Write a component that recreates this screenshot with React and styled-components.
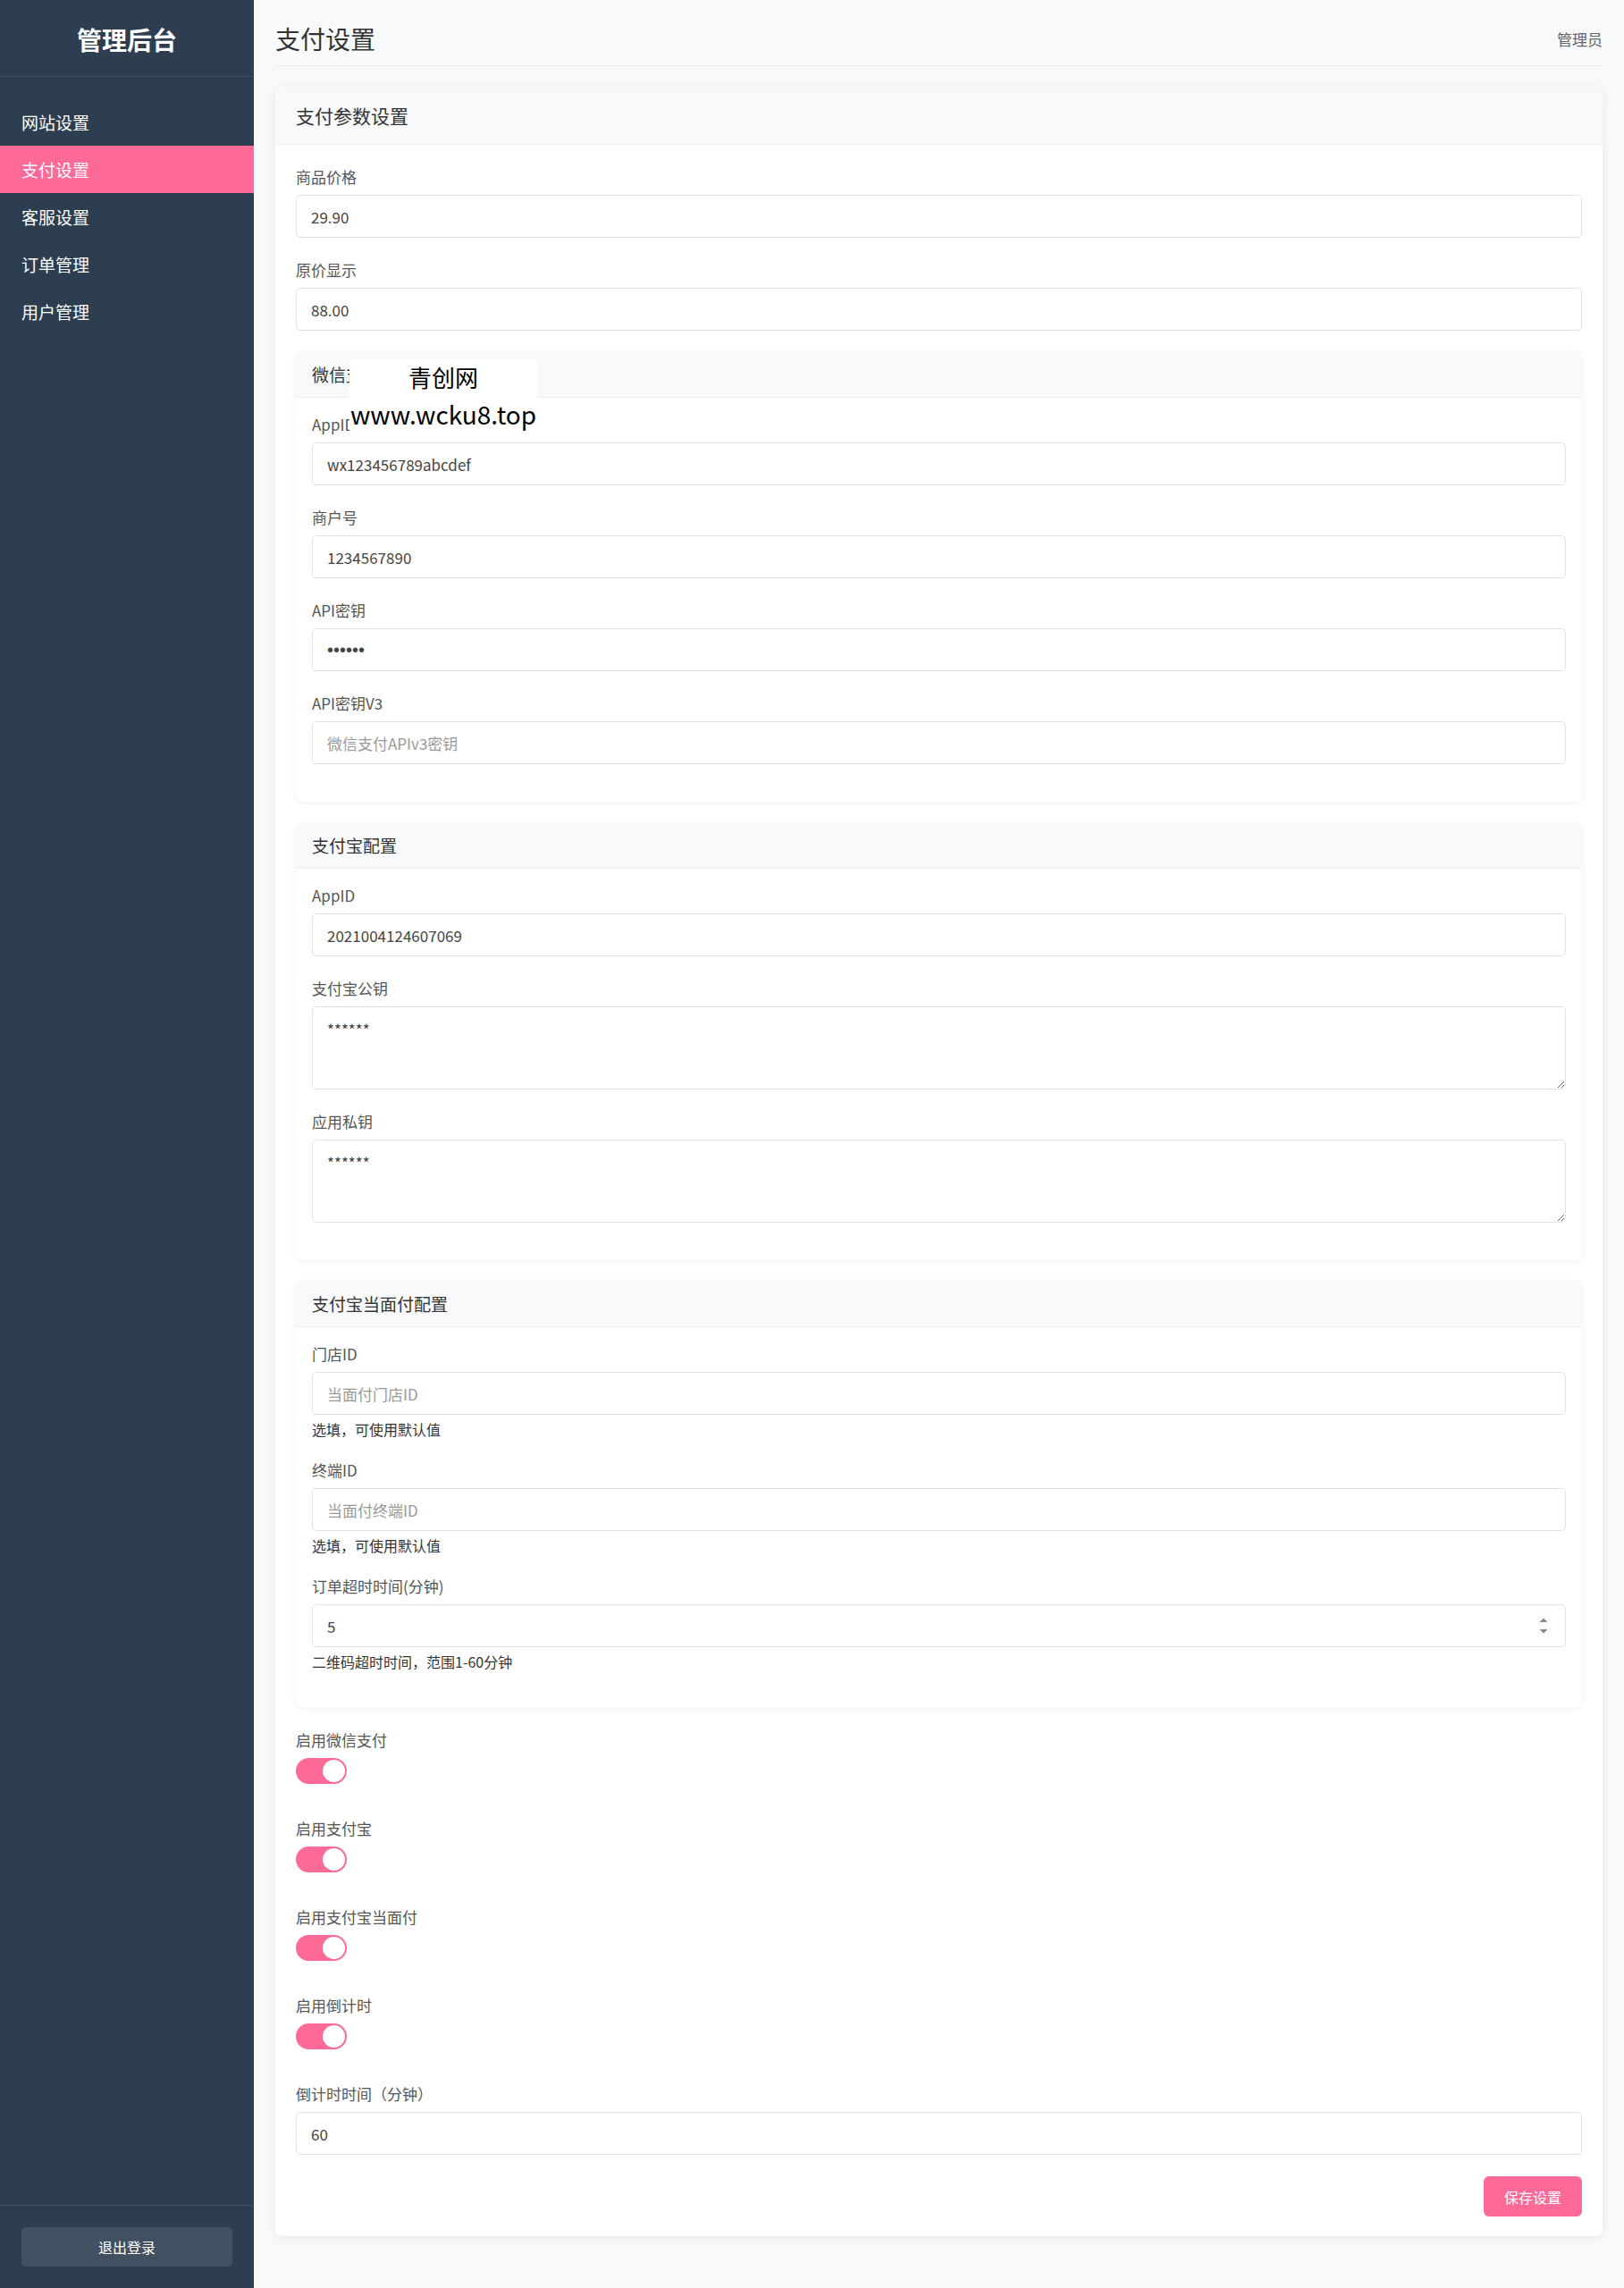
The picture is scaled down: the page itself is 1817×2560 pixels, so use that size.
import React from "react";
import styled, { createGlobalStyle } from "styled-components";

const pink = "#fe6a98";
const font = `"Noto Sans CJK SC", "Liberation Sans", sans-serif`;

const GlobalStyle = createGlobalStyle`
  * {
    box-sizing: border-box;
  }

  body {
    margin: 0;
    background-color: #f8f9fa;
    font-family: ${font};
  }
`;

const Layout = styled.div`
  display: flex;
  min-height: 100vh;
`;

/* Sidebar */

const Sidebar = styled.aside`
  display: flex;
  flex-direction: column;
  flex-shrink: 0;
  width: 284px;
  background-color: #2c3e50;
  color: #fff;
`;

const Brand = styled.div`
  height: 86px;
  padding-top: 24px;
  border-bottom: 1px solid rgba(255, 255, 255, 0.1);
  text-align: center;
  font-size: 28px;
  font-weight: 700;
  line-height: 40px;
`;

const Nav = styled.nav`
  display: flex;
  flex-direction: column;
  flex: 1;
  padding-top: 24px;
`;

const NavItem = styled.div`
  display: flex;
  align-items: center;
  height: 53px;
  padding: 0 24px;
  background-color: ${(p) => (p.$active ? pink : "transparent")};
  font-size: 19px;
  color: #fff;
`;

const SidebarFooter = styled.div`
  padding: 24px;
  border-top: 1px solid rgba(255, 255, 255, 0.1);
`;

const LogoutButton = styled.button`
  display: block;
  width: 236px;
  height: 44px;
  border: none;
  border-radius: 5px;
  background-color: rgba(255, 255, 255, 0.1);
  font-family: ${font};
  font-size: 16px;
  color: #fff;
`;

/* Main */

const Main = styled.main`
  flex: 1;
  min-width: 0;
  padding: 23px 24px 24px;
`;

const Header = styled.header`
  display: flex;
  justify-content: space-between;
  align-items: center;
  padding-bottom: 10px;
  border-bottom: 1px solid #e9ecef;
`;

const PageTitle = styled.h1`
  margin: 0;
  font-size: 28px;
  font-weight: 400;
  line-height: 40px;
  color: #333;
`;

const UserName = styled.span`
  font-size: 17px;
  color: #666;
`;

const Card = styled.section`
  margin-top: 23px;
  border-radius: 8px;
  background-color: #fff;
  box-shadow: 0 2px 12px rgba(0, 0, 0, 0.08);
  overflow: hidden;
`;

const CardHeader = styled.div`
  padding: 18px 23px;
  border-bottom: 1px solid #eee;
  background-color: #f8f9fa;
  font-size: 21px;
  line-height: 28px;
  color: #333;
`;

const CardBody = styled.div`
  padding: 24px 23px 22px;
`;

const Field = styled.div`
  margin-bottom: ${(p) => (p.$switch ? "38px" : "24px")};
`;

const Label = styled.label`
  display: block;
  margin-bottom: 8px;
  font-size: 17px;
  line-height: 24px;
  color: #555;
`;

const Input = styled.input`
  display: block;
  width: 100%;
  height: 48px;
  padding: 0 16px;
  border: 1px solid #dee2e6;
  border-radius: 5px;
  background-color: #fff;
  font-family: ${font};
  font-size: 17px;
  color: #444;
  outline: none;

  &[type="password"] {
    font-family: "Liberation Sans", sans-serif;
    font-size: 20px;
  }

  &::placeholder {
    color: #999;
  }

  &::-webkit-inner-spin-button {
    opacity: 1;
  }
`;

const TextArea = styled.textarea`
  display: block;
  width: 100%;
  height: 93px;
  margin-bottom: 5px;
  padding: 12px 16px;
  border: 1px solid #dee2e6;
  border-radius: 5px;
  font-family: ${font};
  font-size: 17px;
  color: #444;
  resize: vertical;
  outline: none;
`;

const Help = styled.div`
  margin-top: 6px;
  font-size: 16px;
  line-height: 20px;
  color: #333;
`;

const SubSection = styled.div`
  position: relative;
  margin-bottom: 24px;
  border-radius: 8px;
  background-color: #fff;
  box-shadow: 0 1px 6px rgba(0, 0, 0, 0.07);
`;

const SubHeader = styled.div`
  padding: 12px 18px;
  border-bottom: 1px solid #f0f0f0;
  border-radius: 8px 8px 0 0;
  background-color: #f8f9fa;
  font-size: 19px;
  line-height: 26px;
  color: #333;
`;

const SubBody = styled.div`
  padding: 18px;
`;

const Switch = styled.span`
  position: relative;
  display: block;
  width: 57px;
  height: 29px;
  border-radius: 15px;
  background-color: ${(p) => (p.$on ? pink : "#ccc")};

  &::after {
    content: "";
    position: absolute;
    top: 2px;
    ${(p) => (p.$on ? "right: 2px;" : "left: 2px;")}
    width: 25px;
    height: 25px;
    border-radius: 50%;
    background-color: #fff;
  }
`;

const ButtonRow = styled.div`
  display: flex;
  justify-content: flex-end;
`;

const SaveButton = styled.button`
  width: 110px;
  height: 45px;
  border: none;
  border-radius: 6px;
  background-color: ${pink};
  font-family: ${font};
  font-size: 16px;
  color: #fff;
`;

const Watermark = styled.div`
  position: absolute;
  top: 8px;
  left: 60px;
  width: 210px;
  background-color: #fff;
  text-align: center;
  color: #000;
`;

const WatermarkLine = styled.div`
  font-size: ${(p) => p.$size}px;
  line-height: ${(p) => p.$lh}px;
`;

const navItems = ["网站设置", "支付设置", "客服设置", "订单管理", "用户管理"];

const TextField = ({ label, value, placeholder, type = "text", help }) => (
  <Field>
    <Label>{label}</Label>
    <Input type={type} defaultValue={value} placeholder={placeholder} />
    {help && <Help>{help}</Help>}
  </Field>
);

const AreaField = ({ label, value }) => (
  <Field>
    <Label>{label}</Label>
    <TextArea defaultValue={value} />
  </Field>
);

const SwitchField = ({ label }) => (
  <Field $switch>
    <Label>{label}</Label>
    <Switch $on role="switch" aria-checked="true" />
  </Field>
);

const App = () => {
  return (
    <Layout>
      <GlobalStyle />
      <Sidebar>
        <Brand>管理后台</Brand>
        <Nav>
          {navItems.map((item) => (
            <NavItem key={item} $active={item === "支付设置"}>
              {item}
            </NavItem>
          ))}
        </Nav>
        <SidebarFooter>
          <LogoutButton>退出登录</LogoutButton>
        </SidebarFooter>
      </Sidebar>
      <Main>
        <Header>
          <PageTitle>支付设置</PageTitle>
          <UserName>管理员</UserName>
        </Header>
        <Card>
          <CardHeader>支付参数设置</CardHeader>
          <CardBody>
            <TextField label="商品价格" value="29.90" />
            <TextField label="原价显示" value="88.00" />

            <SubSection>
              <SubHeader>微信支付配置</SubHeader>
              <SubBody>
                <TextField label="AppID" value="wx123456789abcdef" />
                <TextField label="商户号" value="1234567890" />
                <TextField label="API密钥" type="password" value="123456" />
                <TextField label="API密钥V3" placeholder="微信支付APIv3密钥" />
              </SubBody>
              <Watermark>
                <WatermarkLine $size={26} $lh={40}>青创网</WatermarkLine>
                <WatermarkLine $size={28} $lh={42}>www.wcku8.top</WatermarkLine>
              </Watermark>
            </SubSection>

            <SubSection>
              <SubHeader>支付宝配置</SubHeader>
              <SubBody>
                <TextField label="AppID" value="2021004124607069" />
                <AreaField label="支付宝公钥" value="******" />
                <AreaField label="应用私钥" value="******" />
              </SubBody>
            </SubSection>

            <SubSection>
              <SubHeader>支付宝当面付配置</SubHeader>
              <SubBody>
                <TextField label="门店ID" placeholder="当面付门店ID" help="选填，可使用默认值" />
                <TextField label="终端ID" placeholder="当面付终端ID" help="选填，可使用默认值" />
                <TextField
                  label="订单超时时间(分钟)"
                  type="number"
                  value="5"
                  help="二维码超时时间，范围1-60分钟"
                />
              </SubBody>
            </SubSection>

            <SwitchField label="启用微信支付" />
            <SwitchField label="启用支付宝" />
            <SwitchField label="启用支付宝当面付" />
            <SwitchField label="启用倒计时" />

            <TextField label="倒计时时间（分钟）" value="60" />

            <ButtonRow>
              <SaveButton>保存设置</SaveButton>
            </ButtonRow>
          </CardBody>
        </Card>
      </Main>
    </Layout>
  );
};

export default App;
